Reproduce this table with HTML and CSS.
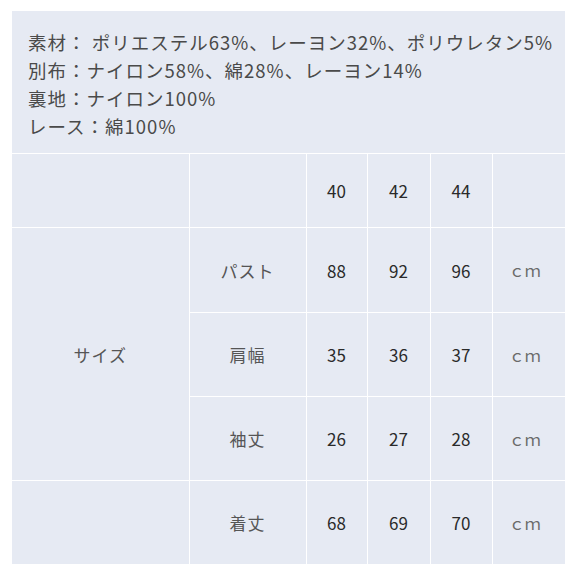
FILE: index.html
```html
<!DOCTYPE html>
<html lang="ja">
<head>
<meta charset="utf-8">
<link rel="stylesheet" href="styles.css">
</head>
<body>
<table class="spec">
  <colgroup>
    <col class="c1"><col class="c2"><col class="c3"><col class="c4"><col class="c5"><col class="c6">
  </colgroup>
  <tr class="material-row">
    <td colspan="6" class="material">
      <div>素材： ポリエステル63%、レーヨン32%、ポリウレタン5%</div>
      <div>別布：ナイロン58%、綿28%、レーヨン14%</div>
      <div>裏地：ナイロン100%</div>
      <div>レース：綿100%</div>
    </td>
  </tr>
  <tr class="head-row">
    <td></td><td></td><td class="num">40</td><td class="num">42</td><td class="num">44</td><td></td>
  </tr>
  <tr class="row first">
    <td rowspan="3" class="label">サイズ</td>
    <td class="label">パスト</td><td class="num">88</td><td class="num">92</td><td class="num">96</td><td class="unit">ｃｍ</td>
  </tr>
  <tr class="row">
    <td class="label">肩幅</td><td class="num">35</td><td class="num">36</td><td class="num">37</td><td class="unit">ｃｍ</td>
  </tr>
  <tr class="row">
    <td class="label">袖丈</td><td class="num">26</td><td class="num">27</td><td class="num">28</td><td class="unit">ｃｍ</td>
  </tr>
  <tr class="row">
    <td></td>
    <td class="label">着丈</td><td class="num">68</td><td class="num">69</td><td class="num">70</td><td class="unit">ｃｍ</td>
  </tr>
</table>
</body>
</html>
```

FILE: styles.css
```css
html, body {
  margin: 0;
  padding: 0;
  background: #ffffff;
}

body {
  padding: 11px 12px;
  font-family: "Noto Sans CJK JP", "Noto Sans", sans-serif;
}

.spec {
  border-collapse: collapse;
  table-layout: fixed;
  width: 553px;
  background: #e6eaf3;
}

.c1 { width: 177px; }
.c2 { width: 117px; }
.c3 { width: 61px; }
.c4 { width: 63px; }
.c5 { width: 62px; }
.c6 { width: 73px; }

.spec td {
  border: 1px solid #ffffff;
  padding: 0;
  text-align: center;
  vertical-align: middle;
}

.spec tr:first-child td { border-top: none; }
.spec td:first-child { border-left: none; }
.spec td:last-child { border-right: none; }
.spec tr:last-child td { border-bottom: none; }

.material-row td.material {
  height: 142px;
  box-sizing: border-box;
  padding: 17px 0 13px 16px;
  text-align: left;
  vertical-align: top;
  font-size: 18.5px;
  letter-spacing: 1px;
  line-height: 28px;
  color: #4a4a4a;
  white-space: nowrap;
}

.head-row td { height: 73px; }
.row td { height: 83px; }
.row.first td { height: 84px; }

.num {
  font-size: 17px;
  color: #2a2a2a;
}

.label {
  font-size: 17px;
  color: #555555;
  letter-spacing: 1px;
}

.unit {
  font-size: 16px;
  color: #6a6a6a;
  padding-right: 8px !important;
}
```
